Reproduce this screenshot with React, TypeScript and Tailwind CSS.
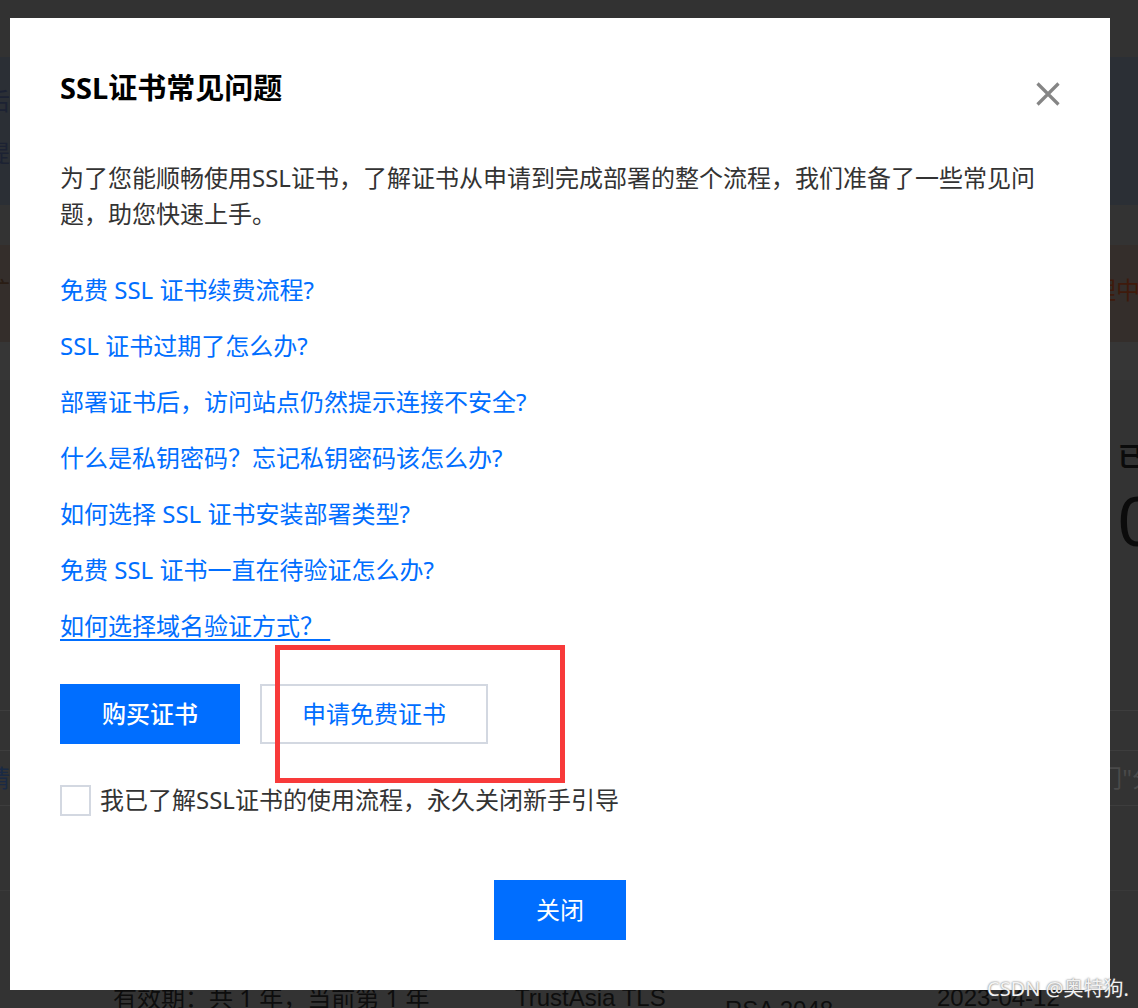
import React from "react";

const FONT = "font-['Noto_Sans','Noto_Sans_CJK_SC',sans-serif]";

const links = [
  "免费 SSL 证书续费流程?",
  "SSL 证书过期了怎么办?",
  "部署证书后，访问站点仍然提示连接不安全?",
  "什么是私钥密码？忘记私钥密码该怎么办?",
  "如何选择 SSL 证书安装部署类型?",
  "免费 SSL 证书一直在待验证怎么办?",
];

export default function App() {
  return (
    <div className={`relative w-[1138px] h-[1008px] overflow-hidden bg-[#333333] ${FONT}`}>
      {/* dimmed page underneath */}
      <div className="flex flex-col">
        <div className="h-[57px] bg-[#323232]" />
        <div className="h-[148px] bg-[#2b2f35] flex flex-col text-[24px] leading-[36px] text-[#1c2233] pt-[26px] gap-[16px]">
          <div className="ml-[-14px]">后</div>
          <div className="ml-[-14px]">提</div>
        </div>
        <div className="h-[40px] bg-[#333333]" />
        <div className="h-[97px] bg-[#342e2b] flex justify-between items-start pt-[27px] text-[24px] leading-[36px]">
          <div className="ml-[-14px] text-[#2a1d14]">扩</div>
          <div className="mr-[-2px] text-[#3f1a0c]">理中</div>
        </div>
        <div className="h-[38px] bg-[#363636]" />
        <div className="h-[330px] bg-[#333333] flex flex-col items-end pt-[58px]">
          <div className="mr-[-10px] w-[30px] text-[26px] leading-[36px] font-bold text-[#0b0b0b]">已</div>
          <div className="mr-[-10px] w-[30px] mt-[8px] text-[70px] leading-[80px] text-[#0b0b0b] font-['Liberation_Sans',sans-serif]">0</div>
        </div>
        <div className="h-[40px] border-t border-[#3d3d3d] bg-[#333333]" />
        <div className="h-[56px] border-t border-[#3d3d3d] border-b bg-[#333333] flex justify-between items-center text-[24px]">
          <div className="ml-[-14px] text-[#1a2a44]">请</div>
          <div className="mr-[-18px] text-[#4a4a4a]">门"分</div>
        </div>
        <div className="h-[85px] border-b border-[#393939] bg-[#333333]" />
        <div className="flex text-[24px] leading-[30px] text-[#0d0d0d] pt-[92px]">
          <div className="ml-[113px] w-[402px]">有效期：共 1 年，当前第 1 年</div>
          <div className="w-[210px] font-['Liberation_Sans',sans-serif]">TrustAsia TLS</div>
          <div className="w-[212px] pt-[12px] font-['Liberation_Sans',sans-serif]">RSA 2048</div>
          <div className="font-['Liberation_Sans',sans-serif]">2023-04-12</div>
        </div>
      </div>

      {/* modal */}
      <div className="absolute left-[10px] top-[18px] w-[1100px] h-[972px] bg-white px-[50px] pt-[52px] flex flex-col">
        <div className="flex justify-between items-start h-[36px]">
          <div className="text-[29px] leading-[36px] font-bold text-black">SSL证书常见问题</div>
          <svg className="mt-[12px]" width="24" height="24" viewBox="0 0 24 24">
            <path d="M1.5 1.5 L22.5 22.5 M22.5 1.5 L1.5 22.5" stroke="#858585" strokeWidth="3.2" fill="none" />
          </svg>
        </div>
        <div className="mt-[54px] text-[24px] leading-[36px] text-[#333333]">
          为了您能顺畅使用SSL证书，了解证书从申请到完成部署的整个流程，我们准备了一些常见问
          <br />
          题，助您快速上手。
        </div>
        <div className="mt-[40px] flex flex-col gap-[20px] text-[24px] leading-[36px] text-[#006eff]">
          {links.map((l) => (
            <div key={l}>{l}</div>
          ))}
          <div>
            <span className="underline underline-offset-[4px] decoration-[2px]">如何选择域名验证方式？&nbsp;</span>
          </div>
        </div>
        <div className="mt-[40px] flex gap-[20px]">
          <div className="h-[60px] w-[180px] bg-[#006eff] text-white text-[24px] font-medium flex items-center justify-center">
            购买证书
          </div>
          <div className="h-[60px] w-[228px] border-2 border-[#d3d8e1] text-[#006eff] text-[24px] flex items-center justify-center">
            申请免费证书
          </div>
        </div>
        <div className="mt-[38px] flex items-center gap-[9px] h-[36px]">
          <div className="w-[31px] h-[31px] border-2 border-[#d3d8e1]" />
          <div className="text-[24px] leading-[36px] text-[#333333]">我已了解SSL证书的使用流程，永久关闭新手引导</div>
        </div>
        <div className="mt-[62px] flex justify-center">
          <div className="h-[60px] w-[132px] bg-[#006eff] text-white text-[24px] flex items-center justify-center">
            关闭
          </div>
        </div>
      </div>

      {/* annotation */}
      <div className="absolute left-[275px] top-[645px] w-[290px] h-[138px] border-[5px] border-[#f83a3a]" />

      {/* watermark */}
      <div className="absolute left-[987px] top-[976px] text-[20px] leading-[26px] text-[#f2f2f2] [text-shadow:0_0_2px_#555]">
        CSDN @奥特狗.
      </div>
    </div>
  );
}
